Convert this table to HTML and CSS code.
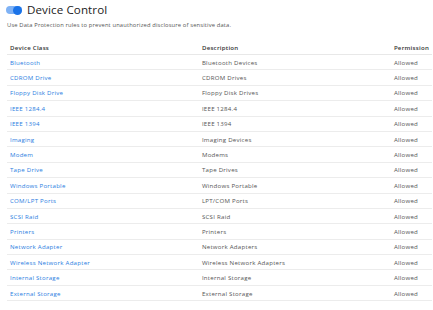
FILE: index.html
```html
<!DOCTYPE html>
<html>
<head>
<meta charset="utf-8">
<link rel="stylesheet" href="styles.css">
</head>
<body>
<div class="page">
  <div class="title-row">
    <span class="toggle"><span class="knob"></span></span>
    <h1 class="title">Device Control</h1>
  </div>
  <p class="subtitle">Use Data Protection rules to prevent unauthorized disclosure of sensitive data.</p>
  <table class="grid">
    <thead>
      <tr><th class="c1">Device Class</th><th class="c2">Description</th><th class="c3">Permission</th></tr>
    </thead>
    <tbody>
      <tr><td><a>Bluetooth</a></td><td>Bluetooth Devices</td><td>Allowed</td></tr>
      <tr><td><a>CDROM Drive</a></td><td>CDROM Drives</td><td>Allowed</td></tr>
      <tr><td><a>Floppy Disk Drive</a></td><td>Floppy Disk Drives</td><td>Allowed</td></tr>
      <tr><td><a>IEEE 1284.4</a></td><td>IEEE 1284.4</td><td>Allowed</td></tr>
      <tr><td><a>IEEE 1394</a></td><td>IEEE 1394</td><td>Allowed</td></tr>
      <tr><td><a>Imaging</a></td><td>Imaging Devices</td><td>Allowed</td></tr>
      <tr><td><a>Modem</a></td><td>Modems</td><td>Allowed</td></tr>
      <tr><td><a>Tape Drive</a></td><td>Tape Drives</td><td>Allowed</td></tr>
      <tr><td><a>Windows Portable</a></td><td>Windows Portable</td><td>Allowed</td></tr>
      <tr><td><a>COM/LPT Ports</a></td><td>LPT/COM Ports</td><td>Allowed</td></tr>
      <tr><td><a>SCSI Raid</a></td><td>SCSI Raid</td><td>Allowed</td></tr>
      <tr><td><a>Printers</a></td><td>Printers</td><td>Allowed</td></tr>
      <tr><td><a>Network Adapter</a></td><td>Network Adapters</td><td>Allowed</td></tr>
      <tr><td><a>Wireless Network Adapter</a></td><td>Wireless Network Adapters</td><td>Allowed</td></tr>
      <tr><td><a>Internal Storage</a></td><td>Internal Storage</td><td>Allowed</td></tr>
      <tr><td><a>External Storage</a></td><td>External Storage</td><td>Allowed</td></tr>
    </tbody>
  </table>
</div>
</body>
</html>
```
FILE: styles.css
```css
html, body { margin: 0; padding: 0; background: #fff; }
body { font-family: "Open Sans", "DejaVu Sans", sans-serif; color: #555; }
.page { padding: 3px 1px 0 7px; }
.title-row { display: flex; align-items: center; gap: 5px; height: 14px; }
.toggle { position: relative; width: 16px; height: 8px; border-radius: 4px; background: #7fb2f5; display: inline-block; margin-left: -1px; }
.knob { position: absolute; right: 0; top: -0.5px; width: 9px; height: 9px; border-radius: 50%; background: #1a73e8; }
.title { margin: 0; font-size: 11.6px; font-weight: 400; color: #222; line-height: 14px; letter-spacing: 0.1px; }
.subtitle { margin: 4px 0 0; font-size: 5.8px; line-height: 8px; color: #555; letter-spacing: 0.15px; }
.grid { width: 100%; border-collapse: collapse; margin-top: 11px; font-size: 6.1px; letter-spacing: 0.25px; }
.grid th { text-align: left; font-weight: 600; color: #333; height: 14px; padding: 0 3px; border-bottom: 1px solid #e8e8e8; }
.grid td { height: 14.4px; padding: 0 3px; border-bottom: 1px solid #ececec; color: #555; }
.grid a { color: #2a7de1; }
.c1 { width: 186px; }
.c2 { width: 186px; }
```
